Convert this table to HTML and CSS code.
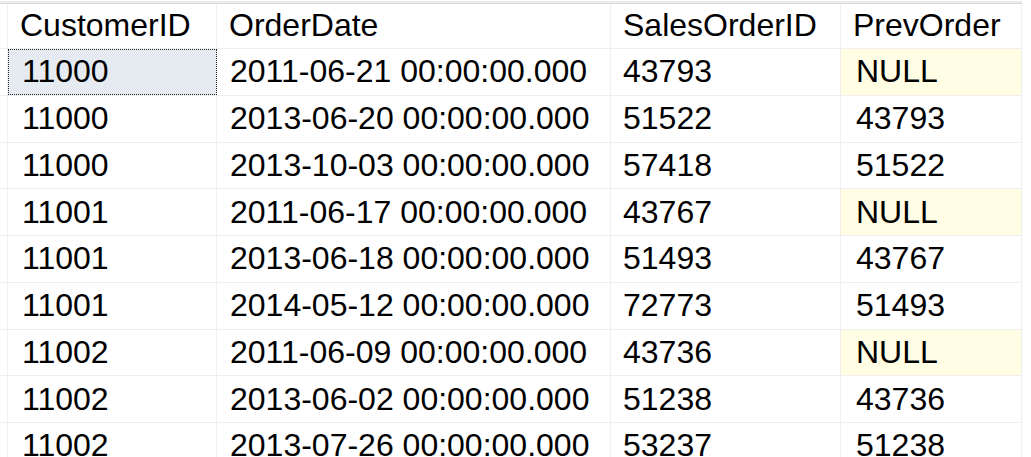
FILE: index.html
```html
<!DOCTYPE html>
<html>
<head>
<meta charset="utf-8">
<link rel="stylesheet" href="styles.css">
</head>
<body>
<div class="topbar"></div>
<div class="grid">
  <div class="row head">
    <div class="stub"></div>
    <div class="cell c1">CustomerID</div>
    <div class="cell c2">OrderDate</div>
    <div class="cell c3">SalesOrderID</div>
    <div class="cell c4">PrevOrder</div>
  </div>
  <div class="row">
    <div class="stub"></div>
    <div class="cell c1 selected">11000</div>
    <div class="cell c2">2011-06-21 00:00:00.000</div>
    <div class="cell c3">43793</div>
    <div class="cell c4 null">NULL</div>
  </div>
  <div class="row">
    <div class="stub"></div>
    <div class="cell c1">11000</div>
    <div class="cell c2">2013-06-20 00:00:00.000</div>
    <div class="cell c3">51522</div>
    <div class="cell c4">43793</div>
  </div>
  <div class="row">
    <div class="stub"></div>
    <div class="cell c1">11000</div>
    <div class="cell c2">2013-10-03 00:00:00.000</div>
    <div class="cell c3">57418</div>
    <div class="cell c4">51522</div>
  </div>
  <div class="row">
    <div class="stub"></div>
    <div class="cell c1">11001</div>
    <div class="cell c2">2011-06-17 00:00:00.000</div>
    <div class="cell c3">43767</div>
    <div class="cell c4 null">NULL</div>
  </div>
  <div class="row">
    <div class="stub"></div>
    <div class="cell c1">11001</div>
    <div class="cell c2">2013-06-18 00:00:00.000</div>
    <div class="cell c3">51493</div>
    <div class="cell c4">43767</div>
  </div>
  <div class="row">
    <div class="stub"></div>
    <div class="cell c1">11001</div>
    <div class="cell c2">2014-05-12 00:00:00.000</div>
    <div class="cell c3">72773</div>
    <div class="cell c4">51493</div>
  </div>
  <div class="row">
    <div class="stub"></div>
    <div class="cell c1">11002</div>
    <div class="cell c2">2011-06-09 00:00:00.000</div>
    <div class="cell c3">43736</div>
    <div class="cell c4 null">NULL</div>
  </div>
  <div class="row">
    <div class="stub"></div>
    <div class="cell c1">11002</div>
    <div class="cell c2">2013-06-02 00:00:00.000</div>
    <div class="cell c3">51238</div>
    <div class="cell c4">43736</div>
  </div>
  <div class="row">
    <div class="stub"></div>
    <div class="cell c1">11002</div>
    <div class="cell c2">2013-07-26 00:00:00.000</div>
    <div class="cell c3">53237</div>
    <div class="cell c4">51238</div>
  </div>
</div>
</body>
</html>
```
FILE: styles.css
```css
html, body {
  margin: 0;
  padding: 0;
  background: #ffffff;
  overflow: hidden;
}
body {
  width: 1031px;
  height: 457px;
  font-family: "Liberation Sans", Arial, sans-serif;
  font-size: 32px;
  color: #000000;
}
.topbar {
  height: 4px;
  box-sizing: border-box;
  background: #ececec;
  border-top: 1px solid #ffffff;
  border-bottom: 1px solid #d8d8d8;
  width: 1022px;
}
.grid {
  display: flex;
  flex-direction: column;
  width: 1022px;
}
.row {
  display: flex;
  height: 46.75px;
  box-sizing: border-box;
  border-bottom: 1px solid #efefef;
  flex-shrink: 0;
}
.row.head {
  height: 45px;
}
.stub {
  width: 8px;
  box-sizing: border-box;
  border-right: 1px solid #efefef;
  flex-shrink: 0;
}
.cell {
  box-sizing: border-box;
  border-right: 1px solid #efefef;
  display: flex;
  align-items: center;
  white-space: nowrap;
  flex-shrink: 0;
  padding-left: 13px;
}
.head .cell {
  padding-left: 12px;
  padding-bottom: 1px;
}
.c1 { width: 209px; }
.c2 { width: 394px; }
.c3 { width: 230px; }
.c4 { width: 181px; }
.c1 { padding-left: 14px; }
.c3 { padding-left: 12px; }
.c4 { padding-left: 15px; }
.head .c4 { padding-left: 12px; }
.selected {
  background: #e6ebf2;
  outline: 1px dotted #222222;
  outline-offset: -1px;
}
.null {
  background: #fffde3;
}
```
